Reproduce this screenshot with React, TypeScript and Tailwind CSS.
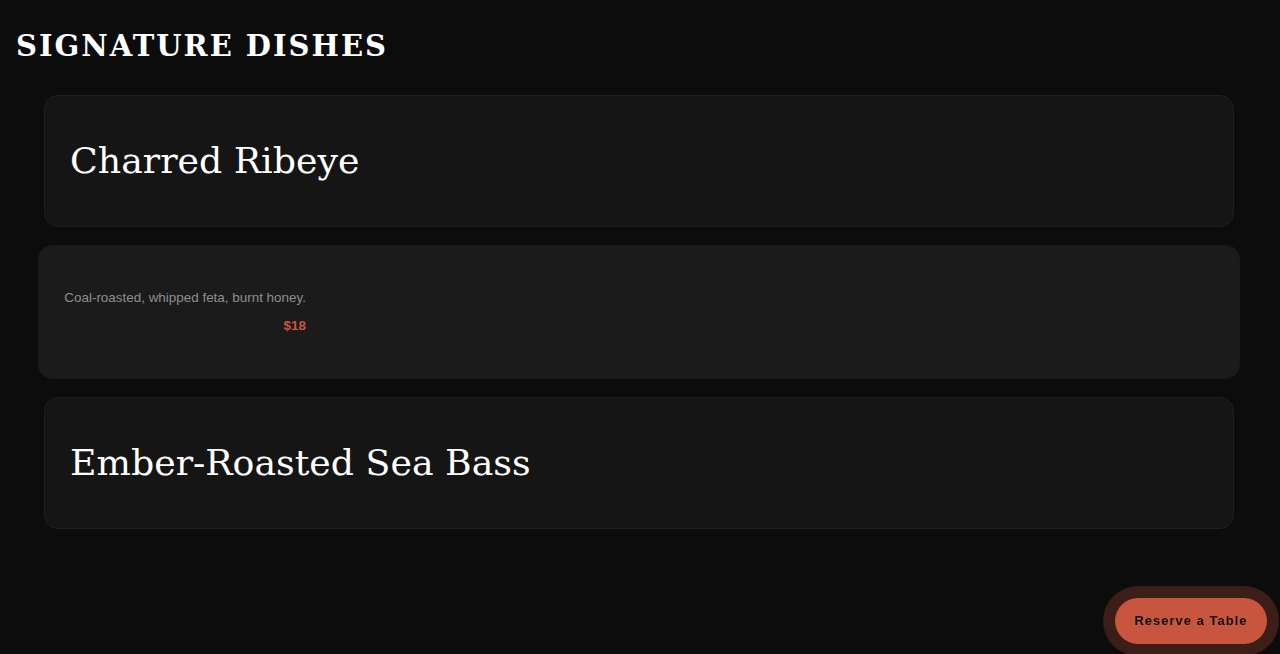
import React from "react";

export default function App() {
  return (
    <div className="min-h-[654px] w-full bg-[#0c0c0c] text-white">
      <h2
        className="px-4 pt-[29px] text-[29px] font-bold uppercase leading-[34px] tracking-[2px] text-white"
        style={{ fontFamily: '"DejaVu Serif", Georgia, serif' }}
      >
        Signature Dishes
      </h2>
      <div className="mt-[32px] flex flex-col gap-[19.5px] pl-[44px] pr-[46px]">
        <div className="flex h-[131.5px] items-center rounded-[14px] border border-[#1f1f1f] bg-[#151515] px-[25px]">
          <h3
            className="text-[36.3px] font-normal leading-none text-white"
            style={{ fontFamily: '"DejaVu Serif", Georgia, serif' }}
          >
            Charred Ribeye
          </h3>
        </div>
        <div className="flex h-[131.5px] scale-[1.01] items-center rounded-[14px] border border-[#1b1b1b] bg-[#1b1b1b] px-[25px]">
          <div className="inline-flex flex-col" style={{ fontFamily: '"Liberation Sans", Arial, sans-serif' }}>
            <p className="text-[13.3px] leading-[16px] text-[#8e8e8e]">Coal-roasted, whipped feta, burnt honey.</p>
            <p className="mt-[12px] text-right text-[13.3px] font-bold leading-[16px] text-[#c8553d]">$18</p>
          </div>
        </div>
        <div className="flex h-[131.5px] items-center rounded-[14px] border border-[#1f1f1f] bg-[#151515] px-[25px]">
          <h3
            className="text-[36.3px] font-normal leading-none text-white"
            style={{ fontFamily: '"DejaVu Serif", Georgia, serif' }}
          >
            Ember-Roasted Sea Bass
          </h3>
        </div>
      </div>
      <button
        className="fixed bottom-[10px] right-[13px] h-[46px] w-[152px] rounded-full bg-[#c8553d] text-[13px] font-bold tracking-[1px] text-[#111] shadow-[0_0_0_12px_rgba(200,85,61,0.25)]"
        style={{ fontFamily: '"Liberation Sans", Arial, sans-serif' }}
      >
        Reserve a Table
      </button>
    </div>
  );
}
